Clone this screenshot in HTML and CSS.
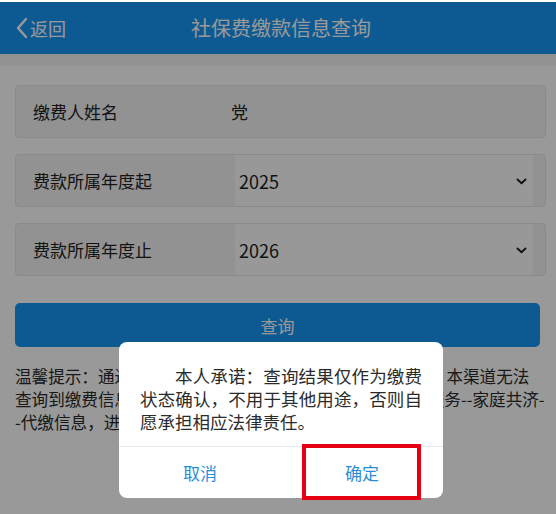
FILE: index.html
```html
<!DOCTYPE html>
<html lang="zh-CN">
<head>
    <meta charset="UTF-8">
    <meta name="viewport" content="width=device-width, initial-scale=1.0">
    <title>社保费缴款信息查询</title>
    <link rel="stylesheet" href="styles.css">
</head>
<body>
    <div class="page">
        <header class="topbar">
            <a href="#" class="back">
                <svg class="back-icon" width="13" height="22" viewBox="0 0 13 22">
                    <path d="M11 2 L3 11 L11 20" fill="none" stroke="#fff" stroke-width="2.4" stroke-linecap="round" stroke-linejoin="round"/>
                </svg>
                返回
            </a>
            <h1 class="title">社保费缴款信息查询</h1>
        </header>

        <main class="content">
            <form class="fields">
                <div class="field">
                    <span class="field-label">缴费人姓名</span>
                    <span class="field-value">党</span>
                </div>
                <div class="field">
                    <span class="field-label">费款所属年度起</span>
                    <div class="select">
                        <span>2025</span>
                        <svg class="caret" width="11" height="7" viewBox="0 0 11 7">
                            <path d="M1.5 1.5 L5.5 5.2 L9.5 1.5" fill="none" stroke="#222" stroke-width="2" stroke-linecap="round" stroke-linejoin="round"/>
                        </svg>
                    </div>
                </div>
                <div class="field">
                    <span class="field-label">费款所属年度止</span>
                    <div class="select">
                        <span>2026</span>
                        <svg class="caret" width="11" height="7" viewBox="0 0 11 7">
                            <path d="M1.5 1.5 L5.5 5.2 L9.5 1.5" fill="none" stroke="#222" stroke-width="2" stroke-linecap="round" stroke-linejoin="round"/>
                        </svg>
                    </div>
                </div>
            </form>

            <button type="button" class="btn-query">查询</button>

            <p class="tip">
                温馨提示：通过家庭共济功能为他人代缴的社保费用信息，本渠道无法<br>
                查询到缴费信息，如需查询登录APP电子税务局社保缴费服务--家庭共济-<br>
                -代缴信息，进行查询。
            </p>
        </main>
    </div>

    <!-- 承诺弹窗 -->
    <div class="mask"></div>
    <div class="dialog">
        <p class="dialog-text">
            本人承诺：查询结果仅作为缴费状态确认，不用于其他用途，否则自愿承担相应法律责任。
        </p>
        <div class="dialog-actions">
            <button type="button" class="dialog-btn">取消</button>
            <button type="button" class="dialog-btn">确定</button>
        </div>
        <div class="mark"></div>
    </div>
</body>
</html>
```

FILE: styles.css
```css
* {
    margin: 0;
    padding: 0;
    box-sizing: border-box;
}

body {
    font-family: "Noto Sans CJK SC", "Noto Sans", sans-serif;
    background: #fff;
    color: #222;
    padding-top: 2px;
    height: 514px;
    overflow: hidden;
}

.topbar {
    height: 52px;
    background: #1796f5;
    display: flex;
    align-items: center;
    position: relative;
}

.back {
    display: flex;
    align-items: center;
    gap: 2px;
    margin-left: 15px;
    color: #fff;
    text-decoration: none;
    font-size: 18px;
    line-height: 22px;
}

.title {
    position: absolute;
    left: 0;
    right: 0;
    text-align: center;
    font-size: 20px;
    font-weight: 400;
    color: #fff;
    line-height: 24px;
    pointer-events: none;
    padding-left: 6px;
}

.content {
    border-top: 12px solid #f3f3f3;
    padding-top: 19px;
}

.fields {
    margin: 0 10px 0 15px;
    display: flex;
    flex-direction: column;
    gap: 16px;
}

.field {
    height: 53px;
    display: flex;
    align-items: stretch;
    background: #f3f3f3;
    border: 1px solid #e6e6e6;
    border-radius: 4px;
    overflow: hidden;
}

.field-label {
    width: 219px;
    padding-left: 17px;
    display: flex;
    align-items: center;
    font-size: 17px;
}

.field-value {
    display: flex;
    align-items: center;
    font-size: 17px;
    margin-left: -4px;
}

.select {
    width: 298px;
    background: #fdfdfd;
    display: flex;
    align-items: center;
    justify-content: space-between;
    padding: 0 6px 0 4px;
    font-size: 18px;
    color: #1e1e1e;
}

.caret {
    margin-top: 2px;
}

.btn-query {
    display: block;
    width: 525px;
    height: 44px;
    margin: 27px 0 0 15px;
    border: none;
    border-radius: 5px;
    background: #1796f5;
    color: #fff;
    font-family: inherit;
    font-size: 17px;
}

.tip {
    margin: 18px 0 0 15px;
    font-size: 16.6px;
    line-height: 23px;
    color: #2a2a2a;
    white-space: nowrap;
}

/* 弹窗 */
.mask {
    position: fixed;
    top: 2px;
    left: 0;
    right: 0;
    bottom: 0;
    background: rgba(0, 0, 0, 0.4);
}

.dialog {
    position: fixed;
    left: 119px;
    top: 342px;
    width: 324px;
    background: #fff;
    border-radius: 8px;
}

.dialog-text {
    padding: 22px 21px 13px;
    font-size: 17.5px;
    line-height: 23px;
    text-indent: 2em;
    color: #2b2b2b;
    text-align: justify;
}

.dialog-actions {
    display: flex;
    border-top: 1px solid #e8e8e8;
}

.dialog-btn {
    flex: 1;
    height: 51px;
    border: none;
    background: none;
    color: #2a8ed6;
    font-family: inherit;
    font-size: 17px;
}

.mark {
    position: absolute;
    left: 183px;
    top: 102px;
    width: 119px;
    height: 56px;
    border: 4px solid #e60012;
}
```
